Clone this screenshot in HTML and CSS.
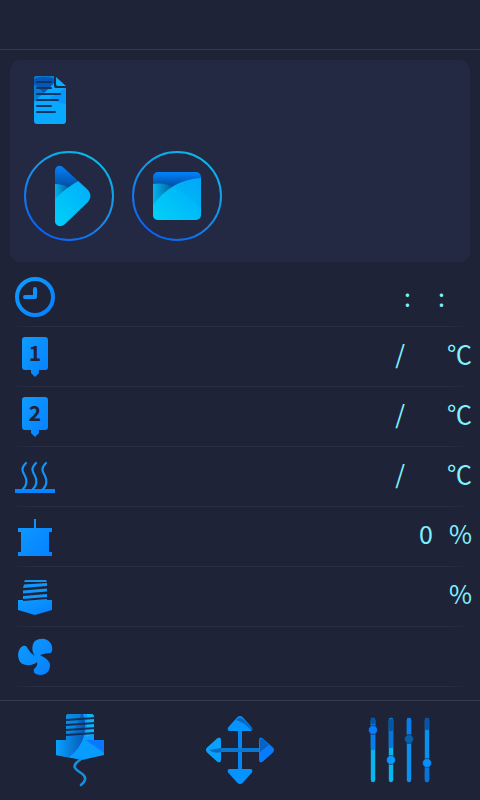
FILE: index.html
```html
<!DOCTYPE html>
<html lang="en">
<head>
<meta charset="utf-8">
<meta name="viewport" content="width=device-width, initial-scale=1">
<title>Printer</title>
<link rel="stylesheet" href="styles.css">
</head>
<body>
<svg class="defs" width="0" height="0" aria-hidden="true">
  <defs>
    <linearGradient id="blue" x1="0" y1="0" x2="1" y2="1"><stop offset="0" stop-color="#0f9cff"/><stop offset="1" stop-color="#0580ff"/></linearGradient>
    <linearGradient id="ring" x1="0.8" y1="0" x2="0.2" y2="1"><stop offset="0" stop-color="#08bdea"/><stop offset="0.5" stop-color="#168ee8"/><stop offset="1" stop-color="#095cf5"/></linearGradient>
    <linearGradient id="cyan" x1="0" y1="1" x2="1" y2="0"><stop offset="0" stop-color="#00d2f8"/><stop offset="1" stop-color="#00a8fa"/></linearGradient>
    <linearGradient id="deep" x1="0" y1="0" x2="0" y2="1"><stop offset="0" stop-color="#0084ff"/><stop offset="1" stop-color="#034390"/></linearGradient>
    <linearGradient id="shade" x1="0" y1="0" x2="1" y2="0"><stop offset="0" stop-color="#00b5ee"/><stop offset="1" stop-color="#045090"/></linearGradient>
    <linearGradient id="slide" x1="0" y1="0" x2="1" y2="0"><stop offset="0" stop-color="#0aa0ff"/><stop offset="1" stop-color="#0758b4"/></linearGradient>
  </defs>
</svg>
<div class="screen">
  <header class="topbar"></header>
  <main class="content">
    <section class="job">
      <svg class="job-file" viewBox="0 0 48 48" aria-hidden="true">
        <clipPath id="page"><path d="M11 0H28V10Q28 12 30 12H40V45Q40 48 37 48H11Q8 48 8 45V3Q8 0 11 0Z"/></clipPath>
        <g clip-path="url(#page)">
          <path fill="#08a9ff" d="M8 0h32v48H8z"/>
          <path fill="#067dd4" d="M8 0h20v7L8 26z"/>
          <path fill="#0755b5" d="M8 3C13 0 23 0 28 3V7L18 17Q13 12 8 8Z"/>
          <path fill="#0796fb" d="M24 22 40 12v16q-9-1-16-6z"/>
        </g>
        <path fill="#08aeff" d="M30 1 40 10H32Q30 10 30 8Z"/>
        <path stroke="#0b3565" stroke-width="2" stroke-linecap="round" d="M11 6H25M11 12H25M11 18H34M11 24H32M11 30H25M11 36H29"/>
      </svg>
      <div class="job-actions">
        <button class="round" type="button" aria-label="Start">
          <svg viewBox="0 0 90 90" aria-hidden="true">
            <circle cx="45" cy="45" r="44" fill="none" stroke="url(#ring)" stroke-width="2"/>
            <clipPath id="play"><path d="M31 20C31 15 36 13 40 17L64 39Q69 45 64 51L41 73C37 77 31 75 31 70Z"/></clipPath>
            <g clip-path="url(#play)">
              <path fill="url(#deep)" d="M31 14h40v26H31z"/>
              <path fill="url(#shade)" d="M31 33Q38 33 47 37L44 52H31Z"/>
              <path fill="url(#cyan)" d="M31 48Q41 37 58 28L72 26V78H31Z"/>
            </g>
          </svg>
        </button>
        <button class="round" type="button" aria-label="Stop">
          <svg viewBox="0 0 90 90" aria-hidden="true">
            <circle cx="45" cy="45" r="44" fill="none" stroke="url(#ring)" stroke-width="2"/>
            <clipPath id="stop"><rect x="21" y="21" width="48" height="48" rx="5"/></clipPath>
            <g clip-path="url(#stop)">
              <path fill="url(#deep)" d="M21 21h48v17H21z"/>
              <path fill="url(#shade)" d="M21 33Q33 31 44 38V69H21Z"/>
              <path fill="url(#cyan)" d="M21 54Q39 29 69 27V69H21Z"/>
              <path fill="#00a9f5" opacity=".4" d="M43 37Q54 28 69 27V58Q58 45 43 37Z"/>
            </g>
          </svg>
        </button>
      </div>
    </section>
    <ul class="stats">
      <li class="stat">
        <svg class="icon" viewBox="0 0 40 40" aria-hidden="true"><circle cx="20" cy="20" r="18" fill="none" stroke="url(#blue)" stroke-width="4"/><path d="M20 12V20H10" fill="none" stroke="#0f90ff" stroke-width="4" stroke-linecap="round" stroke-linejoin="round"/></svg>
        <p class="value time"><span>:</span><span class="digits"></span><span>:</span><span class="digits"></span></p>
      </li>
      <li class="stat">
        <svg class="icon" viewBox="0 0 40 40" aria-hidden="true"><path fill="url(#blue)" d="M10 0H30Q33 0 33 3V30Q33 33 30 33H24V36L20 40 16 36V33H10Q7 33 7 30V3Q7 0 10 0Z"/><text class="icon-number" x="20" y="24">1</text></svg>
        <p class="value"><span>/</span><span class="reading"></span><span>℃</span></p>
      </li>
      <li class="stat">
        <svg class="icon" viewBox="0 0 40 40" aria-hidden="true"><path fill="url(#blue)" d="M10 0H30Q33 0 33 3V30Q33 33 30 33H24V36L20 40 16 36V33H10Q7 33 7 30V3Q7 0 10 0Z"/><text class="icon-number" x="20" y="24">2</text></svg>
        <p class="value"><span>/</span><span class="reading"></span><span>℃</span></p>
      </li>
      <li class="stat">
        <svg class="icon" viewBox="0 0 40 40" aria-hidden="true"><path fill="#0884ff" d="M0 32H40V36H0Z"/><path fill="none" stroke="#1494f8" stroke-width="2.2" stroke-linecap="round" d="M11 6C5 12 8 15 10 19S12 28 8 32M21 6C15 12 18 15 20 19S22 28 18 32M31 6C25 12 28 15 30 19S32 28 28 32"/></svg>
        <p class="value"><span>/</span><span class="reading"></span><span>℃</span></p>
      </li>
      <li class="stat">
        <svg class="icon" viewBox="0 0 40 40" aria-hidden="true"><path fill="url(#blue)" d="M19 2H21V11H37V15H34V35H37V39H3V35H6V15H3V11H19Z"/></svg>
        <p class="value"><span>0</span><span class="unit">%</span></p>
      </li>
      <li class="stat">
        <svg class="icon" viewBox="0 0 40 40" aria-hidden="true"><path fill="#1296fa" d="M10 3H31L32 5 9 5ZM9 7.500 32 6V9L8 11ZM8 13.500 32 11.500V14.500L8 16.500ZM8 19 32 17V20L8 22Z"/><path fill="url(#blue)" d="M8 24 32 22V23H37V33L20 38 3 33V23H8Z"/></svg>
        <p class="value"><span>%</span></p>
      </li>
      <li class="stat">
        <svg class="icon" viewBox="0 0 40 40" aria-hidden="true"><path fill="url(#blue)" d="M20 19C16 14 17 7 20 4C26 0 34 1 37 9Q38 13 36 16Q31 16 25 18Q35 23 35 28C35 36 28 40 21 37Q18 36 19 32Q23 29 22 25C18 29 10 29 6 26C1 20 3 11 8 9C10 8 12 9 13 12Q15 16 20 19Z"/></svg>
        <p class="value"></p>
      </li>
    </ul>
  </main>
  <nav class="tabs">
    <button class="tab" type="button" aria-label="Filament">
      <svg viewBox="0 0 80 80" aria-hidden="true">
        <clipPath id="nozzle"><path d="M29 4H51Q54 4 54 7V30H64V45L42 50 16 45V30H26V7Q26 4 29 4Z"/></clipPath>
        <g clip-path="url(#nozzle)">
          <path fill="#089cff" d="M16 4h48v46H16z"/>
          <path fill="url(#slide)" d="M16 4H43Q46 12 45 20Q43 37 28 48L16 50Z"/>
          <path fill="#0798e8" d="M26 4H41Q37 16 33 22H26Z" opacity=".5"/>
          <path fill="#10b2f8" d="M47 4H54V24L46 27Z"/>
          <path fill="#076fff" d="M46 30H64V43Z" opacity=".8"/>
        </g>
        <path stroke="#12305a" stroke-width="1.8" d="M26 10 55 8M26 15 55 13M26 20 55 18M26 25 55 23"/>
        <path fill="none" stroke="#1590e0" stroke-width="2.6" stroke-linecap="round" d="M40 50C30 56 36 60 41 63S47 70 41 75"/>
      </svg>
    </button>
    <button class="tab" type="button" aria-label="Move">
      <svg viewBox="0 0 80 80" aria-hidden="true">
        <path stroke="#0588f5" stroke-width="4" d="M40 15V66"/>
        <path stroke="#0878d0" stroke-width="4" d="M18 40H64"/>
        <path fill="#0493ff" stroke="#0493ff" stroke-width="2" stroke-linejoin="round" d="M38 8Q40 6 42 8L51 18Q52 20 50 20H30Q28 20 29 18ZM38 72Q40 74 42 72L51 62Q52 60 50 60H30Q28 60 29 62Z"/>
        <path fill="#0aa0ff" stroke="#0aa0ff" stroke-width="2" stroke-linejoin="round" d="M8 38Q6 40 8 42L18 51Q20 52 20 50V30Q20 28 18 29Z"/>
        <path fill="#087cff" stroke="#087cff" stroke-width="2" stroke-linejoin="round" d="M72 38Q74 40 72 42L62 51Q60 52 60 50V30Q60 28 62 29Z"/>
        <path fill="#0759ac" d="M36 10Q40 5 44 10L52 18V21Q44 12 36 10ZM21 38V42Q14 44 9 40ZM60 30Q61 28 63 29L69 35 60 42Z" opacity=".75"/>
      </svg>
    </button>
    <button class="tab" type="button" aria-label="Settings">
      <svg viewBox="0 0 80 80" aria-hidden="true">
        <g fill="none" stroke-width="4.400" stroke-linecap="round">
          <path stroke="#08b5ed" d="M13 10V70M31 10V70"/><path stroke="#0891ef" d="M49 10V70M67 10V70"/>
          <path stroke="#087df0" d="M13 10V38M49 10V24"/><path stroke="#0875dc" d="M31 10V36M67 60V70"/><path stroke="#0754a5" d="M13 10V12M31 11V19M67 10V18"/>
        </g>
        <g stroke="#1d2439" stroke-width=".6"><circle cx="13" cy="20" r="4.500" fill="#087eff"/><circle cx="31" cy="50" r="4.500" fill="#0599ff"/><circle cx="49" cy="29" r="4.500" fill="#0760a8"/><circle cx="67" cy="53" r="4.500" fill="#0590ff"/></g>
      </svg>
    </button>
  </nav>
</div>
</body>
</html>
```
FILE: styles.css
```css
* {
  box-sizing: border-box;
}

body {
  margin: 0;
  background: #1e2337;
  color: #80f0ff;
  font-family: "Noto Sans CJK SC", "Noto Sans", sans-serif;
  font-size: 25px;
  line-height: 36px;
}

button {
  padding: 0;
  border: 0;
  background: none;
  cursor: pointer;
}

svg {
  display: block;
}

.defs {
  position: absolute;
}

.screen {
  display: flex;
  flex-direction: column;
  min-height: 100vh;
}

.topbar {
  min-height: 50px;
  border-bottom: 1px solid #343a53;
}

.content {
  flex: 1;
  padding: 10px 10px 0;
}

.job {
  padding: 16px 14px 21px;
  border-radius: 10px;
  background: #232942;
}

.job-file {
  width: 48px;
  height: 48px;
  margin: 0 0 27px 2px;
}

.job-actions {
  display: flex;
  gap: 18px;
}

.round {
  width: 90px;
  height: 90px;
  border-radius: 50%;
}

.stats {
  margin: 5px 0 0;
  padding: 0;
  list-style: none;
}

.stat {
  display: flex;
  align-items: center;
  justify-content: space-between;
  height: 60px;
  padding-left: 5px;
  background: linear-gradient(90deg, transparent, #292e42 5%, #292e42 95%, transparent) bottom / 100% 1px no-repeat;
}

.icon {
  width: 40px;
  height: 40px;
}

.icon-number {
  fill: #1e2337;
  font-size: 21px;
  font-weight: 700;
  text-anchor: middle;
}

.value {
  display: flex;
  margin: 0 -2px 0 0;
  padding-bottom: 8px;
}

.time {
  padding-bottom: 2px;
}

.digits {
  width: 27px;
}

.reading {
  width: 42px;
}

.unit {
  margin-left: 16px;
}

.tabs {
  display: grid;
  grid-template-columns: repeat(3, 1fr);
  min-height: 100px;
  border-top: 1px solid #343a53;
}

.tab {
  display: flex;
  align-items: center;
  justify-content: center;
  padding-bottom: 2px;
}

.tab svg {
  width: 80px;
  height: 80px;
}
```
